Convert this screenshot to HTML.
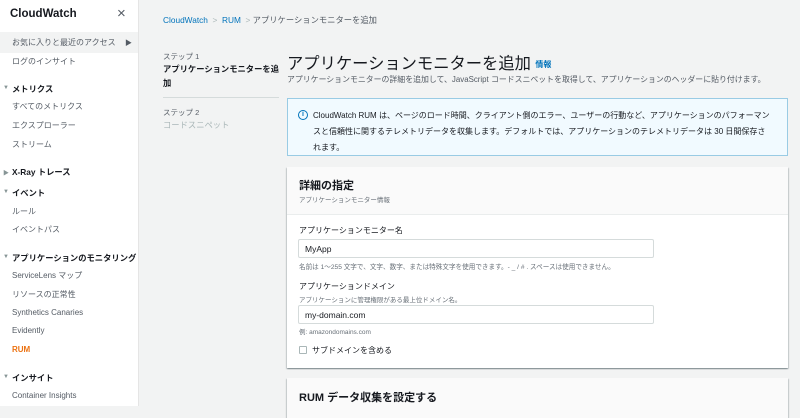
<!DOCTYPE html>
<html><head><meta charset="utf-8"><style>
*{margin:0;padding:0;box-sizing:border-box}
body{width:800px;height:406px;overflow:hidden;background:#f2f3f3;font-family:"Liberation Sans","Noto Sans CJK JP",sans-serif;color:#16191f;position:relative}
.a{position:absolute;white-space:nowrap}
#sb{position:absolute;left:0;top:0;width:139px;height:406px;background:#fff;border-right:1px solid #e5e5e5}
.s{font-size:8px;color:#545b64;left:12px}
.h{font-size:8.3px;font-weight:bold;left:12px;color:#16191f}
.tri{font-size:6px;color:#879596;left:3px}
.box{position:absolute;left:287px;width:501px;background:#fff;box-shadow:0 1px 1px rgba(0,28,36,.3),1px 1px 1px rgba(0,28,36,.15),-1px 1px 1px rgba(0,28,36,.15)}
.inp{position:absolute;left:298px;width:356px;height:19px;border:1px solid #d5dbdb;border-radius:2px;background:#fff;font-size:8.5px;padding:4px 0 0 6px}
</style></head><body>
<div id="sb">
<div class="a" style="left:10px;top:8px;font-size:11.5px;font-weight:bold">CloudWatch</div>
<div class="a" style="left:117px;top:5px;font-size:15px;color:#545b64">×</div>
<div class="a" style="left:0;top:32px;width:138px;height:21px;background:#f2f3f3"></div>
<div class="a s" style="top:37px">お気に入りと最近のアクセス</div>
<div class="a" style="left:125px;top:38px;font-size:7px;color:#545b64">▶</div>
<div class="a s" style="top:56px">ログのインサイト</div>
<div class="a tri" style="top:85px">▼</div><div class="a h" style="top:83px">メトリクス</div>
<div class="a s" style="top:101px">すべてのメトリクス</div>
<div class="a s" style="top:120px">エクスプローラー</div>
<div class="a s" style="top:139px">ストリーム</div>
<div class="a tri" style="top:168px">▶</div><div class="a h" style="top:166px">X-Ray トレース</div>
<div class="a tri" style="top:189px">▼</div><div class="a h" style="top:187px">イベント</div>
<div class="a s" style="top:206px">ルール</div>
<div class="a s" style="top:224px">イベントパス</div>
<div class="a tri" style="top:254px">▼</div><div class="a h" style="top:252px">アプリケーションのモニタリング</div>
<div class="a s" style="top:270px">ServiceLens マップ</div>
<div class="a s" style="top:289px">リソースの正常性</div>
<div class="a s" style="top:308px">Synthetics Canaries</div>
<div class="a s" style="top:326px">Evidently</div>
<div class="a s" style="top:345px;color:#ec7211;font-weight:bold">RUM</div>
<div class="a tri" style="top:374px">▼</div><div class="a h" style="top:372px">インサイト</div>
<div class="a s" style="top:391px">Container Insights</div>
</div>
<div class="a" style="left:163px;top:14px;font-size:8.3px;color:#0073bb">CloudWatch <span style="color:#aab7b8">&nbsp;&gt;&nbsp;</span> RUM <span style="color:#aab7b8">&nbsp;&gt;&nbsp;</span><span style="color:#545b64">アプリケーションモニターを追加</span></div>
<div class="a" style="left:163px;top:51px;font-size:7.5px;color:#545b64">ステップ 1</div>
<div class="a" style="left:163px;top:62px;font-size:8.3px;font-weight:bold;line-height:14px">アプリケーションモニターを追<br>加</div>
<div class="a" style="left:163px;top:97px;width:116px;height:1px;background:#d5dbdb"></div>
<div class="a" style="left:163px;top:107px;font-size:7.5px;color:#545b64">ステップ 2</div>
<div class="a" style="left:163px;top:119px;font-size:8.3px;color:#aab7b8">コードスニペット</div>
<div class="a" style="left:287px;top:50px;font-size:16.3px">アプリケーションモニターを追加 <span style="font-size:8px;color:#0073bb;font-weight:bold;vertical-align:middle">情報</span></div>
<div class="a" style="left:287px;top:74px;font-size:7.9px;color:#545b64">アプリケーションモニターの詳細を追加して、JavaScript コードスニペットを取得して、アプリケーションのヘッダーに貼り付けます。</div>
<div class="a" style="left:287px;top:98px;width:501px;height:58px;background:#f1faff;border:1px solid #99cbe4"></div>
<div class="a" style="left:298px;top:110px;width:10px;height:10px;border:1.2px solid #0073bb;border-radius:50%;font-size:7px;color:#0073bb;text-align:center;line-height:8px;font-weight:bold">i</div>
<div class="a" style="left:313px;top:108px;font-size:8px;line-height:16px">CloudWatch RUM は、ページのロード時間、クライアント側のエラー、ユーザーの行動など、アプリケーションのパフォーマン<br>スと信頼性に関するテレメトリデータを収集します。デフォルトでは、アプリケーションのテレメトリデータは 30 日間保存さ<br>れます。</div>
<div class="box" style="top:167px;height:201px"></div>
<div class="a" style="left:287px;top:167px;width:501px;height:48px;background:#fafafa;border-bottom:1px solid #eaeded"></div>
<div class="a" style="left:299px;top:177px;font-size:11px;font-weight:bold">詳細の指定</div>
<div class="a" style="left:299px;top:194px;font-size:6.5px;color:#687078">アプリケーションモニター情報</div>
<div class="a" style="left:299px;top:225px;font-size:8px">アプリケーションモニター名</div>
<div class="inp" style="top:239px">MyApp</div>
<div class="a" style="left:299px;top:261px;font-size:6.6px;color:#687078">名前は 1〜255 文字で、文字、数字、または特殊文字を使用できます。- _ / # . スペースは使用できません。</div>
<div class="a" style="left:299px;top:281px;font-size:8px">アプリケーションドメイン</div>
<div class="a" style="left:299px;top:294px;font-size:6.5px;color:#687078">アプリケーションに管理権限がある最上位ドメイン名。</div>
<div class="inp" style="top:305px">my-domain.com</div>
<div class="a" style="left:299px;top:326px;font-size:6.5px;color:#687078">例: amazondomains.com</div>
<div class="a" style="left:299px;top:346px;width:8px;height:8px;border:1px solid #aab7b8;border-radius:1px;background:#fff"></div>
<div class="a" style="left:312px;top:345px;font-size:8px;color:#16191f">サブドメインを含める</div>
<div class="box" style="top:378px;height:40px;background:#fafafa"></div>
<div class="a" style="left:299px;top:389px;font-size:11px;font-weight:bold">RUM データ収集を設定する</div>
</body></html>
